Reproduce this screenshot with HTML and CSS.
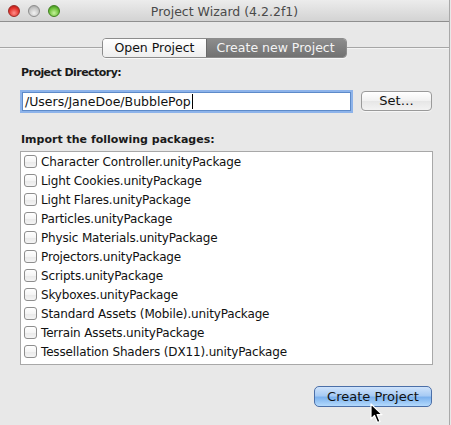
FILE: index.html
```html
<!DOCTYPE html>
<html>
<head>
<meta charset="utf-8">
<link rel="stylesheet" href="styles.css">
</head>
<body>
<div class="window">
  <div class="titlebar">
    <div class="lights">
      <span class="light red"></span>
      <span class="light gray"></span>
      <span class="light green"></span>
    </div>
    <div class="title">Project Wizard (4.2.2f1)</div>
  </div>
  <div class="content">
    <div class="tabstrip">
      <div class="segmented">
        <div class="seg">Open Project</div>
        <div class="seg active">Create new Project</div>
      </div>
    </div>
    <div class="label first">Project Directory:</div>
    <div class="dirrow">
      <div class="field">/Users/JaneDoe/BubblePop<span class="caret"></span></div>
      <div class="btn set">Set…</div>
    </div>
    <div class="label second">Import the following packages:</div>
    <div class="list">
      <div class="row"><span class="check"></span><span>Character Controller.unityPackage</span></div>
      <div class="row"><span class="check"></span><span>Light Cookies.unityPackage</span></div>
      <div class="row"><span class="check"></span><span>Light Flares.unityPackage</span></div>
      <div class="row"><span class="check"></span><span>Particles.unityPackage</span></div>
      <div class="row"><span class="check"></span><span>Physic Materials.unityPackage</span></div>
      <div class="row"><span class="check"></span><span>Projectors.unityPackage</span></div>
      <div class="row"><span class="check"></span><span>Scripts.unityPackage</span></div>
      <div class="row"><span class="check"></span><span>Skyboxes.unityPackage</span></div>
      <div class="row"><span class="check"></span><span>Standard Assets (Mobile).unityPackage</span></div>
      <div class="row"><span class="check"></span><span>Terrain Assets.unityPackage</span></div>
      <div class="row"><span class="check"></span><span>Tessellation Shaders (DX11).unityPackage</span></div>
      <div class="row"><span class="check"></span></div>
    </div>
    <div class="footer">
      <div class="btn primary">Create Project</div>
      <svg class="cursor" width="14" height="22" viewBox="0 0 14 22">
        <path d="M1 1 L1 16 L4.5 12.5 L7.5 19.5 L10 18.4 L7.1 11.6 L12 11.6 Z" fill="#000" stroke="#fff" stroke-width="1.2" stroke-linejoin="round"/>
      </svg>
    </div>
  </div>
</div>
</body>
</html>
```
FILE: styles.css
```css
html, body {
  margin: 0;
  padding: 0;
  background: #e8e8e8;
}
body {
  width: 451px;
  height: 425px;
  overflow: hidden;
  font-family: "DejaVu Sans", "Liberation Sans", sans-serif;
  color: #111;
}
.window {
  width: 450px;
  height: 425px;
  border-right: 1px solid #a9a9a9;
  box-sizing: border-box;
  background: #e8e8e8;
}
.titlebar {
  height: 21px;
  border-bottom: 1px solid #8f8f8f;
  background: linear-gradient(#ececec, #d3d3d3);
  display: flex;
  align-items: center;
  position: relative;
}
.lights {
  display: flex;
  gap: 8px;
  padding-left: 8px;
}
.light {
  width: 12px;
  height: 12px;
  border-radius: 50%;
  box-sizing: border-box;
  margin-top: 1px;
}
.red {
  background: radial-gradient(circle at 50% 70%, #ff8f8a 0%, #e4362f 55%, #a8110c 100%);
  border: 1px solid #9a2a25;
}
.gray {
  background: radial-gradient(circle at 50% 70%, #f2f2f2 0%, #c8c8c8 55%, #9c9c9c 100%);
  border: 1px solid #8d8d8d;
}
.green {
  background: radial-gradient(circle at 50% 70%, #c6f29c 0%, #6fc23c 55%, #2f7c13 100%);
  border: 1px solid #40801f;
}
.title {
  flex: 1;
  text-align: center;
  font-size: 12.5px;
  color: #4a4a4a;
  margin-left: -60px;
  padding-top: 2px;
}
.content {
  padding: 0 18px 0 20px;
}
.tabstrip {
  margin: 16px -18px 0 -20px;
  display: flex;
  align-items: center;
}
.tabstrip::before,
.tabstrip::after {
  content: "";
  flex: 1;
  height: 1px;
  background: #a6a6a6;
  border-bottom: 1px solid #f4f4f4;
}
.segmented {
  display: flex;
  height: 20px;
  border: 1px solid #8c8c8c;
  border-radius: 4px;
  overflow: hidden;
  box-sizing: border-box;
  box-shadow: 0 1px 0 rgba(255,255,255,0.7);
}
.seg {
  font-size: 12.5px;
  line-height: 18px;
  padding: 0 11px 0 11px;
  background: linear-gradient(#ffffff, #eeeeee);
  color: #111;
}
.seg.active {
  background: linear-gradient(#8d8d8d, #727272);
  color: #f4f4f4;
  border-left: 1px solid #6a6a6a;
  padding: 0 11px 0 10px;
}
.label {
  font-size: 11px;
  font-weight: bold;
  line-height: 14px;
  color: #1a1a1a;
}
.label.first {
  margin-top: 8px;
  padding-left: 1px;
  letter-spacing: -0.55px;
}
.label.second {
  margin-top: 22px;
  padding-left: 1px;
}
.dirrow {
  display: flex;
  margin-top: 10px;
  align-items: flex-start;
}
.field {
  width: 325px;
  flex: none;
  height: 17px;
  margin: 2px 0 0 2px;
  background: #fff;
  border: 1px solid #5d8ac9;
  box-shadow: 0 0 0 2px #8db3ea;
  font-size: 12.5px;
  line-height: 17px;
  padding-left: 2px;
  box-sizing: content-box;
  white-space: nowrap;
}
.caret {
  display: inline-block;
  width: 1px;
  height: 15px;
  background: #000;
  vertical-align: -3px;
  margin-left: 1px;
}
.btn {
  box-sizing: border-box;
  border-radius: 4px;
  text-align: center;
  font-size: 13px;
}
.set {
  width: 71px;
  flex: none;
  height: 20px;
  margin-left: 10px;
  margin-top: 1px;
  border: 1px solid #9a9a9a;
  background: linear-gradient(#ffffff, #f1f1f1 50%, #e6e6e6 51%, #f3f3f3);
  line-height: 18px;
  box-shadow: 0 1px 0 rgba(255,255,255,0.6);
}
.list {
  margin-top: 4px;
  width: 413px;
  height: 214px;
  box-sizing: border-box;
  border: 1px solid #a8a8a8;
  background: #fff;
  overflow: hidden;
  padding-left: 3px;
}
.row {
  display: flex;
  align-items: center;
  height: 19px;
  gap: 4px;
  font-size: 12px;
  letter-spacing: -0.15px;
  white-space: nowrap;
}
.check {
  width: 13px;
  height: 13px;
  box-sizing: border-box;
  border: 1px solid #8e8e8e;
  border-radius: 3px;
  background: linear-gradient(#ffffff, #f5f5f5 50%, #e9e9e9 51%, #f4f4f4);
  flex: none;
}
.footer {
  display: flex;
  justify-content: flex-end;
  margin-top: 21px;
  position: relative;
}
.primary {
  width: 118px;
  height: 21px;
  margin-right: -1px;
  border: 1px solid #4b6fa8;
  border-radius: 5px;
  background: linear-gradient(#cfe3fb, #a8cbf4 45%, #7db2ee 55%, #b4dafc);
  line-height: 19px;
}
.cursor {
  position: absolute;
  left: 350px;
  top: 17px;
}
```
